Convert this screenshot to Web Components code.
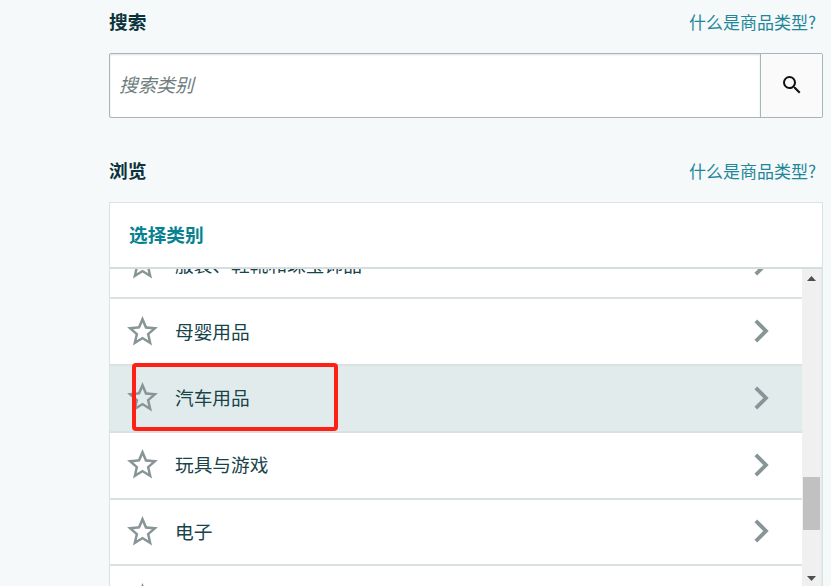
<!DOCTYPE html>
<html lang="zh-CN">
<head>
<meta charset="UTF-8">
<title>选择类别</title>
<style>
  html, body {
    margin: 0;
    height: 586px;
    overflow: hidden;
  }
  body {
    background: #f5f9fa;
    color: #17434a;
    font-family: "Noto Sans CJK SC", sans-serif;
    font-size: 18.7px;
  }
</style>
</head>
<body>
<category-page>
  <section-heading label="搜索" link="什么是商品类型?"></section-heading>
  <search-box placeholder="搜索类别"></search-box>
  <section-heading class="browse" label="浏览" link="什么是商品类型?"></section-heading>
  <category-panel>
    <span slot="title">选择类别</span>
    <category-row>服装、鞋靴和珠宝饰品</category-row>
    <category-row>母婴用品</category-row>
    <category-row selected>汽车用品</category-row>
    <category-row>玩具与游戏</category-row>
    <category-row>电子</category-row>
    <category-row></category-row>
  </category-panel>
</category-page>

<script>
class CategoryPage extends HTMLElement {
  connectedCallback() {
    this.attachShadow({ mode: 'open' });
    this.shadowRoot.innerHTML = `
      <style>
        :host {
          display: flex;
          flex-direction: column;
          width: 714px;
          height: 586px;
          margin-left: 109px;
          overflow: hidden;
        }
        ::slotted(.browse) {
          margin-top: 31px;
        }
      </style>
      <slot></slot>
    `;
  }
}
customElements.define('category-page', CategoryPage);

class SectionHeading extends HTMLElement {
  connectedCallback() {
    this.attachShadow({ mode: 'open' });
    this.shadowRoot.innerHTML = `
      <style>
        :host {
          display: flex;
          flex: none;
          justify-content: space-between;
          align-items: center;
          height: 42px;
          padding: 0 7px 11px 0;
          box-sizing: content-box;
        }
        h2 {
          margin: 0;
          padding-bottom: 1px;
          color: #0b333b;
          font-size: 18.7px;
          font-weight: 700;
        }
        a {
          color: #1f8799;
          font-size: 17px;
          text-decoration: none;
        }
      </style>
      <h2>${this.getAttribute('label')}</h2>
      <a href="#">${this.getAttribute('link')}</a>
    `;
  }
}
customElements.define('section-heading', SectionHeading);

class SearchBox extends HTMLElement {
  connectedCallback() {
    this.attachShadow({ mode: 'open' });
    this.shadowRoot.innerHTML = `
      <style>
        :host {
          display: flex;
          flex: none;
          box-sizing: border-box;
          height: 65px;
          border: 1px solid #a7b5b6;
          border-radius: 2px;
          background: #fff;
          overflow: hidden;
        }
        .field {
          flex: 1;
          display: flex;
          align-items: center;
          padding: 0 0 4px 9px;
          color: #6f7d7e;
          font-style: italic;
          box-shadow: inset 0 1px 2px rgba(0, 0, 0, 0.13);
        }
        .button {
          display: flex;
          align-items: center;
          justify-content: center;
          width: 61px;
          padding-bottom: 2px;
          border-left: 1px solid #a7b5b6;
          background: #fafafa;
        }
        svg {
          width: 24px;
          height: 24px;
          fill: #111;
        }
      </style>
      <div class="field">${this.getAttribute('placeholder')}</div>
      <div class="button">
        <svg viewBox="0 0 24 24"><path d="M15.5 14h-.79l-.28-.27A6.47 6.47 0 0 0 16 9.5 6.5 6.5 0 1 0 9.5 16c1.61 0 3.09-.59 4.23-1.57l.27.28v.79l5 4.99L20.49 19l-4.99-5zm-6 0C7.01 14 5 11.99 5 9.5S7.01 5 9.5 5 14 7.01 14 9.5 11.99 14 9.5 14z"/></svg>
      </div>
    `;
  }
}
customElements.define('search-box', SearchBox);

class CategoryPanel extends HTMLElement {
  connectedCallback() {
    this.attachShadow({ mode: 'open' });
    this.shadowRoot.innerHTML = `
      <style>
        :host {
          display: flex;
          flex: 1;
          flex-direction: column;
          min-height: 0;
          border: solid #dae2e2;
          border-width: 1px 1px 0;
          background: #fff;
        }
        header {
          flex: none;
          display: flex;
          align-items: center;
          box-sizing: border-box;
          height: 66px;
          padding: 0 0 3px 19px;
          border-bottom: 2px solid #d5dddd;
          color: #078291;
          font-weight: 700;
        }
        .body {
          flex: 1;
          display: flex;
          min-height: 0;
        }
        .list {
          flex: 1;
          overflow: hidden;
        }
        .rows {
          margin-top: -36.5px;
        }
        .scrollbar {
          display: flex;
          flex-direction: column;
          align-items: center;
          box-sizing: border-box;
          width: 20px;
          padding: 7px 0 5px;
          border-right: 1px solid #e4e8e8;
          background: #f0f0f0;
        }
        .scrollbar svg {
          width: 9px;
          height: 5px;
          fill: #505050;
        }
        .thumb {
          width: 17px;
          height: 53px;
          margin: 196px 0 auto;
          background: #c1c1c1;
        }
      </style>
      <header><slot name="title"></slot></header>
      <div class="body">
        <div class="list"><div class="rows"><slot></slot></div></div>
        <div class="scrollbar">
          <svg viewBox="0 0 9 5"><path d="M0 5L4.5 0 9 5z"/></svg>
          <div class="thumb"></div>
          <svg viewBox="0 0 9 5"><path d="M0 0h9L4.5 5z"/></svg>
        </div>
      </div>
    `;
  }
}
customElements.define('category-panel', CategoryPanel);

class CategoryRow extends HTMLElement {
  connectedCallback() {
    this.attachShadow({ mode: 'open' });
    this.shadowRoot.innerHTML = `
      <style>
        :host {
          position: relative;
          display: flex;
          align-items: center;
          box-sizing: border-box;
          height: 66.75px;
          padding: 0 18.5px 0 14px;
          border-bottom: 2px solid #dae1e1;
        }
        :host([selected]) {
          background: #e2ebec;
        }
        svg {
          flex: none;
          fill: #879596;
        }
        .star {
          width: 37px;
          height: 37px;
          margin-bottom: 1px;
        }
        .name {
          flex: 1;
          padding: 0 0 3px 14px;
        }
        .chevron {
          width: 46px;
          height: 46px;
          margin-bottom: 1px;
        }
        /* red frame drawn round the chosen category */
        .frame {
          display: none;
          position: absolute;
          left: 22px;
          top: -3px;
          box-sizing: border-box;
          width: 206px;
          height: 68px;
          border: 4px solid #ff2015;
          border-radius: 4px;
          z-index: 1;
        }
        :host([selected]) .frame {
          display: block;
        }
      </style>
      <svg class="star" viewBox="0 0 24 24"><path d="M22 9.24l-7.19-.62L12 2 9.19 8.63 2 9.24l5.46 4.73L5.82 21 12 17.27 18.18 21l-1.63-7.03L22 9.24zM12 15.4l-3.76 2.27 1-4.28-3.32-2.88 4.38-.38L12 6.1l1.71 4.04 4.38.38-3.32 2.88 1 4.28L12 15.4z"/></svg>
      <span class="name"><slot></slot></span>
      <svg class="chevron" viewBox="0 0 24 24"><path d="M10 6L8.59 7.41 13.17 12l-4.58 4.59L10 18l6-6z"/></svg>
      <div class="frame"></div>
    `;
  }
}
customElements.define('category-row', CategoryRow);
</script>
</body>
</html>
